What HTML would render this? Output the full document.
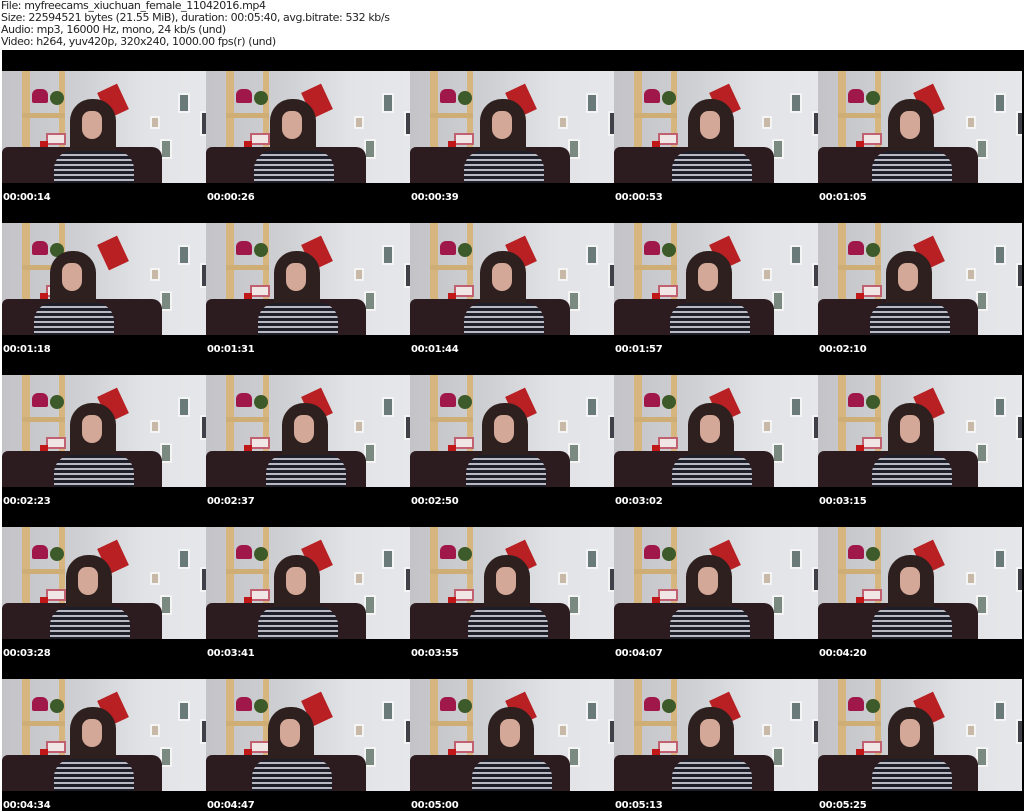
<!DOCTYPE html>
<html><head><meta charset="utf-8"><style>
*{margin:0;padding:0;box-sizing:border-box}
body{width:1024px;height:811px;background:#fff;position:relative;overflow:hidden;font-family:"DejaVu Sans","Liberation Sans",sans-serif}
.hd{position:absolute;left:1px;top:0;font-size:11px;line-height:12px;color:#222;letter-spacing:-0.4px;white-space:pre}
.blk{position:absolute;left:2px;top:50px;width:1022px;height:761px;background:#000}
.c{position:absolute;width:204px;height:112px;overflow:hidden;background:linear-gradient(90deg,#c4c4c8 0,#cfd0d4 40%,#e2e3e6 70%,#e6e7ea 100%)}
.c div{position:absolute}
.up1{left:20px;top:0;width:8px;height:80px;background:#d6b67e}
.up2{left:57px;top:0;width:6px;height:80px;background:#d6b67e}
.sh{left:20px;top:42px;width:43px;height:5px;background:#cfae76}
.lamp{left:30px;top:18px;width:16px;height:14px;background:#a0184a;border-radius:6px 6px 2px 2px}
.plant{left:48px;top:20px;width:14px;height:14px;background:#3c5a2a;border-radius:50%}
.frm{left:44px;top:62px;width:20px;height:12px;background:#f0e6e6;border:2px solid #c06070}
.post{left:100px;top:16px;width:22px;height:28px;background:#b82024;transform:rotate(-25deg)}
.p1{left:176px;top:22px;width:12px;height:20px;background:#6a7a78;border:2px solid #f4f4f4}
.p2{left:158px;top:68px;width:12px;height:20px;background:#7a8a80;border:2px solid #f4f4f4}
.p3{left:148px;top:45px;width:10px;height:13px;background:#c8b8a8;border:2px solid #f4f4f4}
.p4{left:198px;top:40px;width:10px;height:25px;background:#404048;border:2px solid #f4f4f4}
.mug{left:38px;top:70px;width:8px;height:8px;background:#c01818}
.sofa{left:0;top:76px;width:160px;height:36px;background:#2c1c20;border-radius:6px 10px 0 0}
.hair{top:28px;width:46px;height:76px;background:#2e201e;border-radius:22px 22px 6px 6px}
.face{top:40px;width:20px;height:28px;background:#d4a898;border-radius:10px 10px 12px 12px}
.shirt{top:80px;width:80px;height:40px;border-radius:18px 18px 0 0;background:repeating-linear-gradient(180deg,#1e1e28 0 3px,#b8b8c4 3px 5px)}
.t{position:absolute;color:#fff;font-weight:bold;font-size:10px;line-height:12px;font-family:"DejaVu Sans",sans-serif;letter-spacing:-0.3px}
</style></head><body>
<div class="hd">File: myfreecams_xiuchuan_female_11042016.mp4
Size: 22594521 bytes (21.55 MiB), duration: 00:05:40, avg.bitrate: 532 kb/s
Audio: mp3, 16000 Hz, mono, 24 kb/s (und)
Video: h264, yuv420p, 320x240, 1000.00 fps(r) (und)</div>
<div class="blk"></div>
<div id="g"></div>
<script>
var ts=["00:00:14","00:00:26","00:00:39","00:00:53","00:01:05","00:01:18","00:01:31","00:01:44","00:01:57","00:02:10","00:02:23","00:02:37","00:02:50","00:03:02","00:03:15","00:03:28","00:03:41","00:03:55","00:04:07","00:04:20","00:04:34","00:04:47","00:05:00","00:05:13","00:05:25"];
var off=[0,-4,2,6,2,-20,0,2,4,0,0,8,4,6,2,-4,0,6,4,2,0,-6,10,6,2];
var h="";
for(var i=0;i<25;i++){var r=Math.floor(i/5),c=i%5,x=2+c*204,y=71+r*152,g=off[i];
h+='<div class="c" style="left:'+x+'px;top:'+y+'px"><div class="up1"></div><div class="up2"></div><div class="sh"></div><div class="lamp"></div><div class="plant"></div><div class="frm"></div><div class="mug"></div><div class="post"></div><div class="p1"></div><div class="p2"></div><div class="p3"></div><div class="p4"></div><div class="sofa"></div><div class="hair" style="left:'+(68+g)+'px"></div><div class="face" style="left:'+(80+g)+'px"></div><div class="shirt" style="left:'+(52+g)+'px"></div></div>';
h+='<div class="t" style="left:'+(x+1)+'px;top:'+(y+121)+'px">'+ts[i]+'</div>';}
document.getElementById("g").innerHTML=h;
</script>
</body></html>
